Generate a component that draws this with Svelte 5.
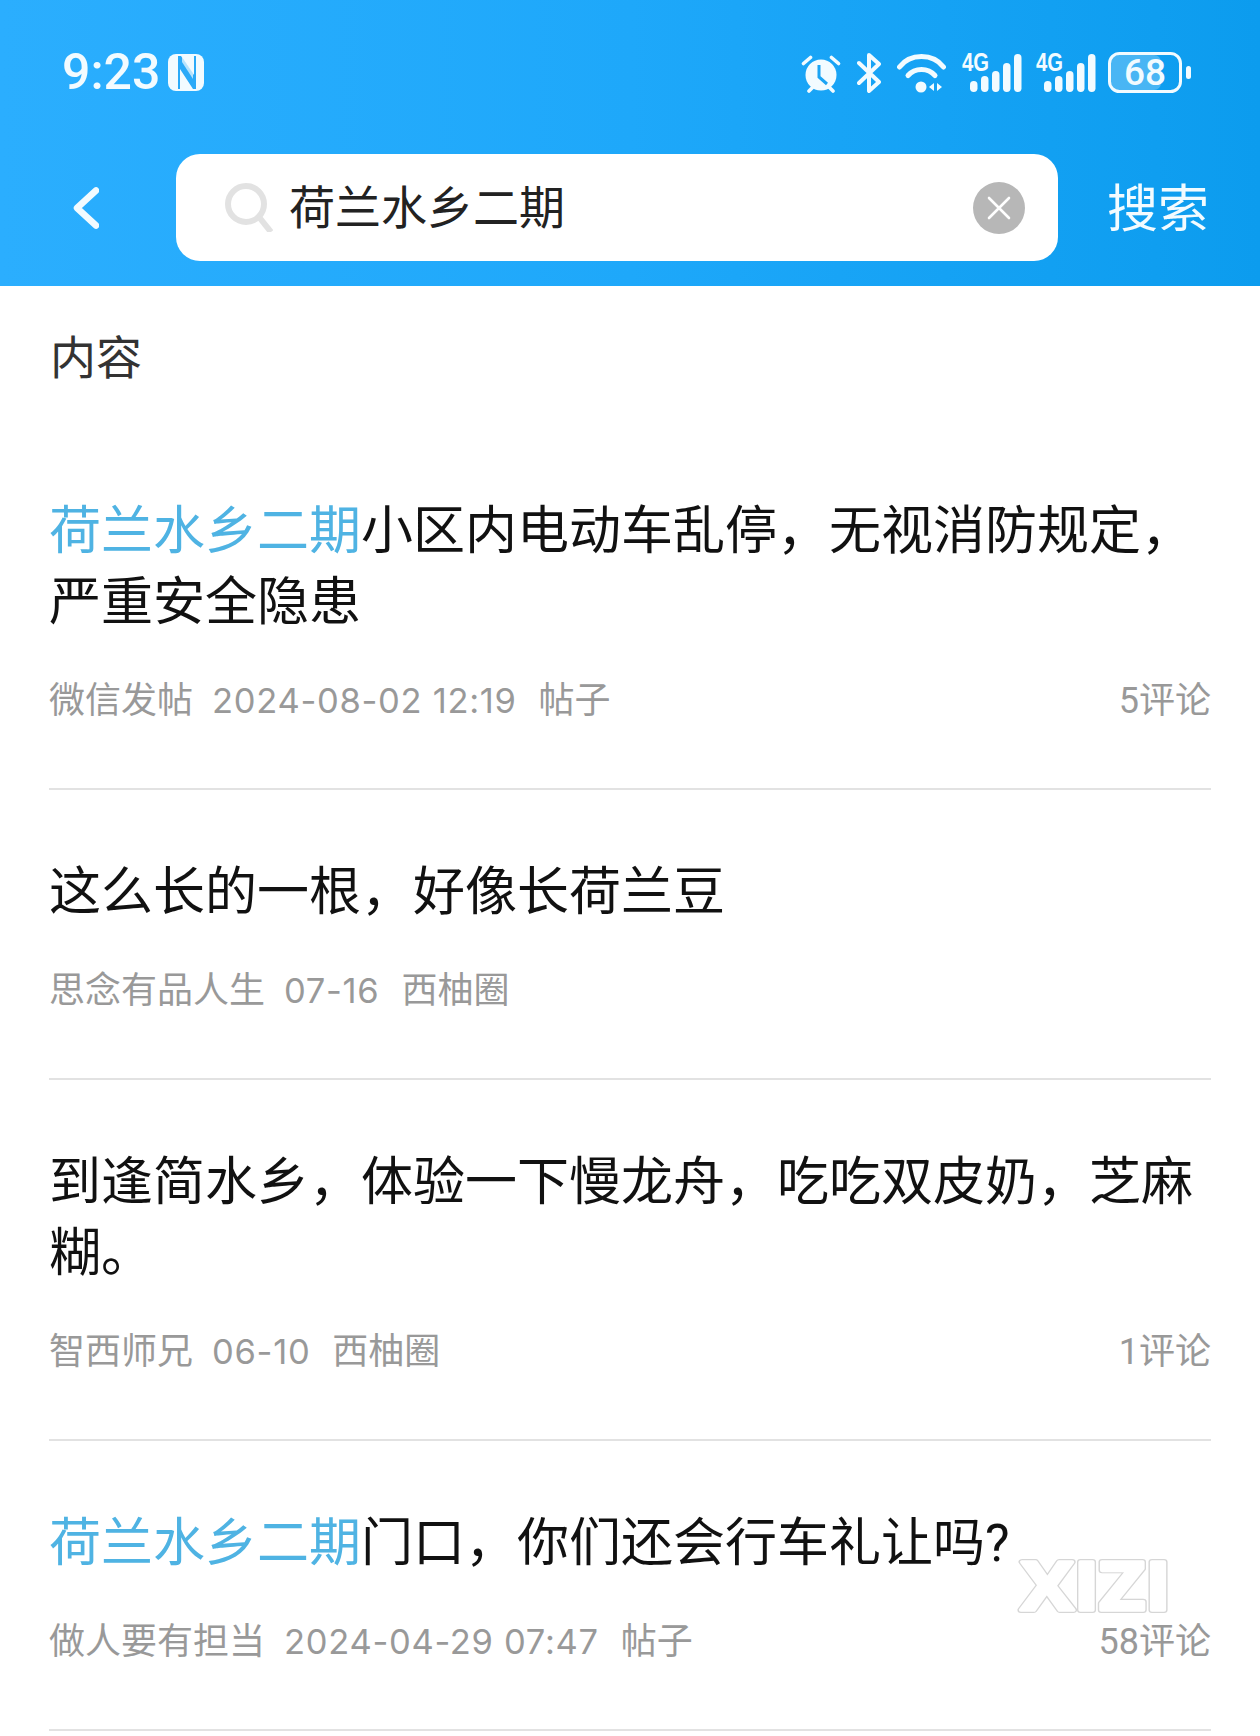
<script>
	const rows = [
		{ hit: '荷兰水乡二期', title: '小区内电动车乱停，无视消防规定，严重安全隐患', by: '微信发帖', date: '2024-08-02 12:19', from: '帖子', comments: '5评论' },
		{ hit: '', title: '这么长的一根，好像长荷兰豆', by: '思念有品人生', date: '07-16', from: '西柚圈', comments: '' },
		{ hit: '', title: '到逢简水乡，体验一下慢龙舟，吃吃双皮奶，芝麻糊。', by: '智西师兄', date: '06-10', from: '西柚圈', comments: '1评论' },
		{ hit: '荷兰水乡二期', title: '门口，你们还会行车礼让吗?', by: '做人要有担当', date: '2024-04-29 07:47', from: '帖子', comments: '58评论' }
	];
	const barTops = [28, 23, 18, 10, 1];
</script>

<div class="page">
	<header class="top">
		<div class="status">
			<span class="time">9:23</span>
			<svg class="nfc" viewBox="0 0 36 37" width="36" height="37">
				<rect width="36" height="37" rx="8" fill="#f2fbff" />
				<path d="M10 2h3l13 19V2h2v33h-3L12 15v20h-2z" fill="#2aaaf8" />
				<path d="M14 8l11 17v-6L14 3z" fill="#f2fbff" opacity=".7" />
			</svg>
			<div class="icons">
				<svg viewBox="0 0 40 40" width="40" height="40">
					<circle cx="20" cy="22" r="15.5" fill="#f2fbff" />
					<path d="M2.5 10.5l7-6M37.5 10.5l-7-6M8 38l4-4M32 38l-4-4" stroke="#f2fbff" stroke-width="3.6" stroke-linecap="round" />
					<path d="M18 12v12l8 7" fill="none" stroke="#1ba4f4" stroke-width="3" />
				</svg>
				<svg viewBox="0 0 24 40" width="24" height="40">
					<path d="M2 10l20 19-10 9V2l10 9L2 30" fill="none" stroke="#f2fbff" stroke-width="4" stroke-linejoin="round" stroke-linecap="round" />
				</svg>
				<svg viewBox="0 0 49 40" width="49" height="40">
					<path d="M2.5 14C13 0 36 0 46.500 14" fill="none" stroke="#f2fbff" stroke-width="5" stroke-linecap="round" />
					<path d="M11 22.500c7-8 20-8 27 0" fill="none" stroke="#f2fbff" stroke-width="5" stroke-linecap="round" />
					<circle cx="24" cy="34" r="5.500" fill="#f2fbff" />
					<path d="M37 30v8l-5-4zM40 30v8l5-4z" fill="#f2fbff" />
				</svg>
				{#each [0, 1] as sim}
					<svg class="signal" viewBox="0 0 58 40" width="58" height="40" data-sim={sim}>
						<text x="0" y="18" class="net" textLength="27" lengthAdjust="spacingAndGlyphs">4G</text>
						{#each barTops as t, i}
							<rect x={8 + i * 11} y={t} width="7.500" height={39 - t} rx="3.700" fill="#f2fbff" />
						{/each}
					</svg>
				{/each}
				<svg class="battery" viewBox="0 0 84 41" width="84" height="41">
					<rect x="3" y="3" width="50" height="35" rx="7" fill="#f2fbff" opacity=".25" />
					<rect x="1.500" y="1.500" width="71" height="38" rx="10" fill="none" stroke="#f2fbff" stroke-width="3" />
					<text x="37" y="33" class="level">68</text>
					<rect x="78" y="14" width="5" height="13" rx="2.500" fill="#f2fbff" />
				</svg>
			</div>
		</div>
		<div class="searchbar">
			<svg class="back" viewBox="0 0 26 42" width="26" height="42">
				<path d="M23 3.500L4 21l19 17.500" fill="none" stroke="#f2fbff" stroke-width="6.500" stroke-linecap="round" stroke-linejoin="round" />
			</svg>
			<div class="input">
				<svg class="glass" viewBox="0 0 48 49" width="48" height="49">
					<circle cx="21" cy="21" r="18" fill="none" stroke="#e2e2e2" stroke-width="6" />
					<path d="M34 34l12 15" stroke="#e2e2e2" stroke-width="6" />
				</svg>
				<span class="query">荷兰水乡二期</span>
				<svg class="clear" viewBox="0 0 52 52" width="52" height="52">
					<circle cx="26" cy="26" r="26" fill="#b7b7b7" />
					<path d="M16 16l20 20M36 16L16 36" stroke="#fff" stroke-width="2.600" stroke-linecap="round" />
				</svg>
			</div>
			<span class="go">搜索</span>
		</div>
	</header>

	<h2 class="section">内容</h2>

	<ul class="list">
		{#each rows as row}
			<li class="row">
				<p class="title"><span class="hit">{row.hit}</span>{row.title}</p>
				<div class="meta">
					<div class="info">
						<span>{row.by}</span>
						<span class="date">{row.date}</span>
						<span>{row.from}</span>
					</div>
					<span>{row.comments}</span>
				</div>
			</li>
		{/each}
	</ul>

	<svg class="mark" viewBox="0 0 156 58" width="156" height="58">
		<text x="3" y="52" class="mark-out" textLength="150" lengthAdjust="spacingAndGlyphs">XIZI</text>
		<text x="3" y="52" class="mark-in" textLength="150" lengthAdjust="spacingAndGlyphs">XIZI</text>
	</svg>
</div>

<style>
	:global(body) {
		margin: 0;
		background: #fff;
	}

	.page {
		position: relative;
		width: 1260px;
		height: 1736px;
		overflow: hidden;
		font-family: Roboto, "Noto Sans CJK SC", sans-serif;
		background: #fff;
	}

	.top {
		height: 286px;
		box-sizing: border-box;
		padding-top: 52px;
		background: linear-gradient(90deg, #2baefe 0%, #1ea8fa 50%, #0c9cee 100%);
		color: #f2fbff;
	}

	.status {
		display: flex;
		align-items: center;
		height: 41px;
		padding: 0 68px 0 62px;
	}

	.time {
		font-size: 50px;
		font-weight: 500;
		line-height: 43px;
		margin-right: 8px;
	}

	.icons {
		display: flex;
		align-items: center;
		gap: 16px;
		margin-left: auto;
	}

	.battery {
		margin-left: -2px;
	}

	.signal {
		overflow: visible;
	}

	.net {
		font-size: 25px;
		font-weight: 700;
		fill: #f2fbff;
		font-family: "Liberation Sans", sans-serif;
	}

	.level {
		font-size: 37px;
		font-weight: 500;
		fill: #f2fbff;
		text-anchor: middle;
	}

	.searchbar {
		display: flex;
		align-items: center;
		margin-top: 61px;
		padding-left: 73px;
	}

	.back {
		margin-right: 77px;
	}

	.input {
		display: flex;
		align-items: center;
		width: 882px;
		height: 107px;
		box-sizing: border-box;
		padding: 0 33px 0 49px;
		background: #fff;
		border-radius: 24px;
	}

	.glass {
		margin-right: 16px;
	}

	.query {
		font-size: 46px;
		color: #222;
		margin-bottom: 7px;
	}

	.clear {
		margin-left: auto;
	}

	.go {
		margin-left: 49px;
		font-size: 51px;
		margin-bottom: 6px;
	}

	.section {
		margin: 0;
		padding: 46px 50px 0;
		font-size: 46px;
		line-height: 52px;
		font-weight: 400;
		color: #333;
	}

	.list {
		list-style: none;
		margin: 0;
		padding: 0 49px;
	}

	.row {
		padding: 67px 0 65px;
		border-bottom: 2px solid #e2e2e2;
	}

	.row:first-child {
		padding-top: 112px;
	}

	.title {
		margin: 0;
		font-size: 52px;
		line-height: 71px;
		color: #111;
	}

	.hit {
		color: #4fb3e3;
	}

	.meta {
		display: flex;
		justify-content: space-between;
		margin-top: 41px;
		font-size: 36px;
		line-height: 44px;
		color: #999;
	}

	.info {
		display: flex;
		gap: 22px;
	}

	.date {
		font-family: Inter, sans-serif;
		font-size: 34.5px;
		letter-spacing: 0.7px;
		margin-left: -3px;
	}

	.mark {
		position: absolute;
		left: 1018px;
		top: 1558px;
		overflow: visible;
	}

	.mark text {
		font-family: "Open Sans", sans-serif;
		font-size: 66px;
		font-weight: 700;
		stroke-linejoin: round;
	}

	.mark-out {
		fill: #d6d6d6;
		stroke: #d6d6d6;
		stroke-width: 6px;
	}

	.mark-in {
		fill: #fff;
		stroke: #fff;
		stroke-width: 3.6px;
	}
</style>
